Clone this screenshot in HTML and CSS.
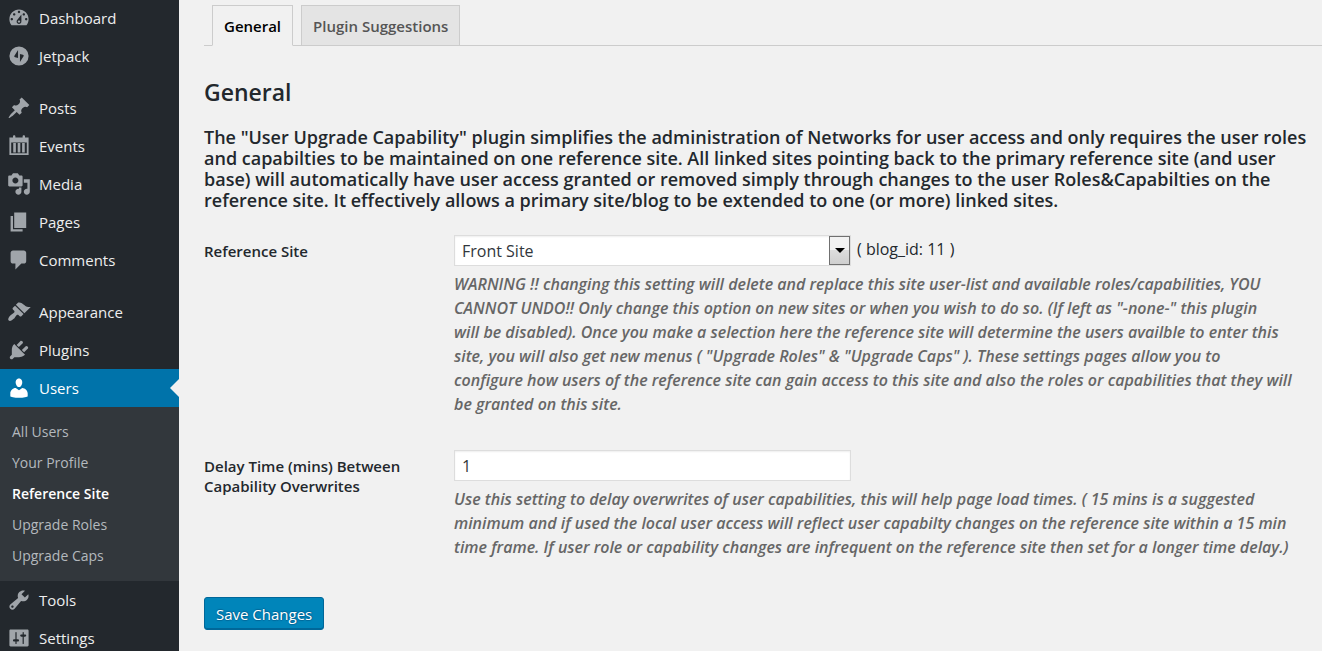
FILE: index.html
```html
<!DOCTYPE html>
<html lang="en">
<head>
<meta charset="utf-8">
<title>Reference Site</title>
<link rel="stylesheet" href="styles.css">
</head>
<body>
<div class="layout">
  <nav class="sidebar" aria-label="Main menu">
    <ul class="menu">
      <li><a class="menu-link" href="#"><svg class="icon" viewBox="0 0 20 20"><path fill-rule="evenodd" d="M3.76 16h12.48c1.1-1.37 1.76-3.11 1.76-5 0-4.42-3.58-8-8-8s-8 3.58-8 8c0 1.89.66 3.63 1.76 5zM10 4c.55 0 1 .45 1 1s-.45 1-1 1-1-.45-1-1 .45-1 1-1zM6 6c.55 0 1 .45 1 1s-.45 1-1 1-1-.45-1-1 .45-1 1-1zm8 0c.55 0 1 .45 1 1s-.45 1-1 1-1-.45-1-1 .45-1 1-1zm-5.37 5.55L12 7v6c0 1.1-.9 2-2 2s-2-.9-2-2c0-.57.24-1.08.63-1.45zM4 10c.55 0 1 .45 1 1s-.45 1-1 1-1-.45-1-1 .45-1 1-1zm12 0c.55 0 1 .45 1 1s-.45 1-1 1-1-.45-1-1 .45-1 1-1zm-5 3c0-.55-.45-1-1-1s-1 .45-1 1 .45 1 1 1 1-.45 1-1z"/></svg>Dashboard</a></li>
      <li><a class="menu-link" href="#"><svg class="icon" viewBox="0 0 20 20"><path fill-rule="evenodd" d="M10 2a8 8 0 1 0 0 16a8 8 0 0 0 0-16zM9.200 5v6.600l-2.400-.6c-.7-.2-.9-.7-.6-1.300zM10.800 15V8.400l2.400.6c.7.2.9.7.6 1.300z"/></svg>Jetpack</a></li>
    </ul>
    <ul class="menu">
      <li><a class="menu-link" href="#"><svg class="icon" viewBox="0 0 20 20"><path d="M10.44 3.02l1.82-1.82 6.36 6.35-1.83 1.82c-1.05-.68-2.48-.57-3.41.36l-.75.75c-.92.93-1.04 2.35-.35 3.41l-1.83 1.82-2.41-2.41-2.8 2.79c-.42.42-3.38 2.71-3.8 2.29s1.86-3.39 2.28-3.81l2.79-2.79L4.1 9.36l1.83-1.82c1.05.69 2.48.57 3.4-.36l.75-.75c.93-.92 1.05-2.35.36-3.41z"/></svg>Posts</a></li>
      <li><a class="menu-link" href="#"><svg class="icon" viewBox="0 0 20 20"><path fill-rule="evenodd" d="M2 3h3V2c0-.7.4-1 1-1s1 .3 1 1v1h6V2c0-.7.4-1 1-1s1 .3 1 1v1h3v14.500H2zM3.500 7v9h13V7zM5.200 7.500h2.200v8H5.200zM8.900 7.500h2.200v8H8.900zM12.600 7.500h2.200v8h-2.200z"/></svg>Events</a></li>
      <li><a class="menu-link" href="#"><svg class="icon" viewBox="0 0 20 20"><path fill-rule="evenodd" d="M13 11V4c0-.55-.45-1-1-1h-1.670L9 1H5L3.670 3H2c-.55 0-1 .45-1 1v7c0 .55.45 1 1 1h10c.55 0 1-.45 1-1zM7 4.500c1.380 0 2.500 1.120 2.500 2.500S8.380 9.500 7 9.500 4.500 8.380 4.500 7 5.620 4.500 7 4.500zM14 6h5v10.500c0 1.380-1.120 2.500-2.500 2.500S14 17.880 14 16.500s1.120-2.500 2.500-2.500c.17 0 .34.02.5.05V9h-3V6zm-4 8.050V13h2v3.500c0 1.380-1.120 2.500-2.500 2.500S7 17.880 7 16.500 8.120 14 9.500 14c.17 0 .34.02.5.05z"/></svg>Media</a></li>
      <li><a class="menu-link" href="#"><svg class="icon" viewBox="0 0 20 20"><path d="M6 15V2h10v13H6zm-1 1h8v2H3V5h2v11z"/></svg>Pages</a></li>
      <li><a class="menu-link" href="#"><svg class="icon" viewBox="0 0 20 20"><path d="M5 2h9c1.100 0 2 .9 2 2v7c0 1.100-.9 2-2 2h-2l-5 5v-5H5c-1.100 0-2-.9-2-2V4c0-1.100.9-2 2-2z"/></svg>Comments</a></li>
    </ul>
    <ul class="menu">
      <li><a class="menu-link" href="#"><svg class="icon" viewBox="0 0 20 20"><path d="M14.480 11.060L7.410 3.990l1.500-1.500c.5-.56 2.300-.47 3.510.32 1.210.8 1.430 1.280 2.910 2.100 1.180.64 2.450 1.260 4.450.85zm-.71.71L6.700 4.700 4.930 6.470c-.39.39-.39 1.020 0 1.410l1.060 1.060c.39.39.39 1.030 0 1.420-.6.6-1.430 1.110-2.210 1.690-.35.26-.7.53-1.010.84C1.430 14.230.4 16.080 1.400 17.070c.99 1 2.840-.03 4.180-1.360.31-.31.58-.66.85-1.020.57-.78 1.080-1.610 1.690-2.210.39-.39 1.020-.39 1.410 0l1.060 1.060c.39.39 1.020.39 1.410 0z"/></svg>Appearance</a></li>
      <li><a class="menu-link" href="#"><svg class="icon" viewBox="0 0 20 20"><path d="M13.110 4.360L9.870 7.600 8 5.730l3.240-3.240c.35-.34 1.050-.2 1.560.32.520.51.66 1.210.31 1.550zm-8 1.770l.91-1.120 9.010 9.010-1.190.84c-.71.71-2.630 1.160-3.820 1.160H6.140L4.900 17.260c-.59.59-1.540.59-2.120 0-.59-.58-.59-1.530 0-2.120l1.240-1.240v-3.880c0-1.130.4-3.190 1.090-3.890zm7.260 3.970l3.240-3.240c.34-.35 1.040-.21 1.550.31.52.51.66 1.210.31 1.550l-3.240 3.250z"/></svg>Plugins</a></li>
      <li>
        <a class="menu-link menu-link-open" href="#"><svg class="icon" viewBox="0 0 20 20"><path d="M10 9.250c-2.270 0-2.730-3.440-2.730-3.440C7 4.020 7.820 2 9.970 2c2.160 0 2.980 2.020 2.710 3.810 0 0-.41 3.440-2.680 3.440zm0 2.570L12.720 10c2.390 0 4.520 2.330 4.520 4.530v2.490s-3.650 1.130-7.240 1.130c-3.650 0-7.240-1.130-7.240-1.130v-2.490c0-2.250 1.940-4.480 4.470-4.480z"/></svg>Users</a>
        <ul class="submenu">
          <li><a class="submenu-link" href="#">All Users</a></li>
          <li><a class="submenu-link" href="#">Your Profile</a></li>
          <li><a class="submenu-link submenu-link-current" href="#" aria-current="page">Reference Site</a></li>
          <li><a class="submenu-link" href="#">Upgrade Roles</a></li>
          <li><a class="submenu-link" href="#">Upgrade Caps</a></li>
        </ul>
      </li>
      <li><a class="menu-link" href="#"><svg class="icon" viewBox="0 0 20 20"><path fill-rule="evenodd" d="M16.680 9.770c-1.340 1.340-3.300 1.670-4.950.99l-5.410 6.520c-.99.99-2.590.99-3.580 0s-.99-2.590 0-3.570l6.520-5.420c-.68-1.650-.35-3.610.99-4.950 1.280-1.280 3.120-1.620 4.720-1.060l-2.890 2.890 2.820 2.820 2.860-2.870c.53 1.580.18 3.390-1.080 4.650zM3.810 16.210c.4.39 1.040.39 1.430 0 .4-.4.4-1.040 0-1.430-.39-.4-1.030-.4-1.430 0-.39.39-.39 1.030 0 1.430z"/></svg>Tools</a></li>
      <li><a class="menu-link" href="#"><svg class="icon" viewBox="0 0 20 20"><path fill-rule="evenodd" d="M18 16V4c0-.55-.45-1-1-1H3c-.55 0-1 .45-1 1v12c0 .55.45 1 1 1h14c.55 0 1-.45 1-1zM8 11h1c.55 0 1 .45 1 1s-.45 1-1 1H8v1.500c0 .28-.22.5-.5.5s-.5-.22-.5-.5V13H6c-.55 0-1-.45-1-1s.45-1 1-1h1V5.500c0-.28.22-.5.5-.5s.5.22.5.5V11zm5-2h-1c-.55 0-1-.45-1-1s.45-1 1-1h1V5.500c0-.28.22-.5.5-.5s.5.22.5.5V7h1c.55 0 1 .45 1 1s-.45 1-1 1h-1v5.500c0 .28-.22.5-.5.5s-.5-.22-.5-.5V9z"/></svg>Settings</a></li>
    </ul>
  </nav>
  <main class="content">
    <nav class="tabs" aria-label="Settings sections">
      <a class="tab tab-active" href="#">General</a>
      <a class="tab" href="#">Plugin Suggestions</a>
    </nav>
    <form class="settings">
      <h2 class="title">General</h2>
      <p class="intro">The "User Upgrade Capability" plugin simplifies the administration of Networks for user access and only requires the user roles<br>and capabilties to be maintained on one reference site. All linked sites pointing back to the primary reference site (and user<br>base) will automatically have user access granted or removed simply through changes to the user Roles&amp;Capabilties on the<br>reference site. It effectively allows a primary site/blog to be extended to one (or more) linked sites.</p>
      <div class="field">
        <label class="field-label" for="site">Reference Site</label>
        <div class="field-body">
          <div class="control-line">
            <div class="select-wrap">
              <select class="control" id="site"><option>Front Site</option></select>
              <span class="select-arrow"><svg class="caret" viewBox="0 0 10 5"><path d="M0 0h10L5 5z"/></svg></span>
            </div>
            <span class="note">( blog_id: 11 )</span>
          </div>
          <p class="help">WARNING !! changing this setting will delete and replace this site user-list and available roles/capabilities, YOU<br>CANNOT UNDO!! Only change this option on new sites or when you wish to do so. (If left as "-none-" this plugin<br>will be disabled). Once you make a selection here the reference site will determine the users availble to enter this<br>site, you will also get new menus ( "Upgrade Roles" &amp; "Upgrade Caps" ). These settings pages allow you to<br>configure how users of the reference site can gain access to this site and also the roles or capabilities that they will<br>be granted on this site.</p>
        </div>
      </div>
      <div class="field">
        <label class="field-label" for="delay">Delay Time (mins) Between Capability Overwrites</label>
        <div class="field-body">
          <input class="control" id="delay" type="text" value="1">
          <p class="help">Use this setting to delay overwrites of user capabilities, this will help page load times. ( 15 mins is a suggested<br>minimum and if used the local user access will reflect user capabilty changes on the reference site within a 15 min<br>time frame. If user role or capability changes are infrequent on the reference site then set for a longer time delay.)</p>
        </div>
      </div>
      <button class="save" type="button">Save Changes</button>
    </form>
  </main>
</div>
</body>
</html>
```
FILE: styles.css
```css
* { box-sizing: border-box; }
html { overflow: hidden; }
body {
  margin: 0;
  background: #f1f1f1;
  color: #23282d;
  font-family: "Open Sans", "Noto Sans", sans-serif;
  font-size: 15px;
}
ul { margin: 0; padding: 0; list-style: none; }
a { text-decoration: none; }

.layout { display: flex; height: 100vh; }

.sidebar {
  flex: 0 0 179px;
  display: flex;
  flex-direction: column;
  gap: 14px;
  margin-top: -1px;
  background: #23282d;
  overflow: hidden;
}
.menu-link {
  display: flex;
  align-items: center;
  gap: 8px;
  height: 38px;
  padding-left: 7px;
  color: #eee;
}
.icon { width: 24px; height: 24px; fill: #a0a5aa; }
.menu-link-open { position: relative; background: #0073aa; color: #fff; }
.menu-link-open .icon { fill: #fff; }
.menu-link-open::after {
  content: "";
  position: absolute;
  right: 0;
  top: 10px;
  border: 9px solid transparent;
  border-left-width: 0;
  border-right-color: #f1f1f1;
}
.submenu { padding: 9px 0 10px; background: #32373c; }
.submenu-link {
  display: block;
  padding-left: 12px;
  color: #b4b9be;
  font-size: 14px;
  line-height: 31px;
}
.submenu-link-current { color: #fff; font-weight: 600; }

.content { flex: 1; min-width: 0; padding: 5px 0 0 25px; }
.tabs {
  display: flex;
  gap: 8px;
  padding-left: 8px;
  border-bottom: 1px solid #ccc;
}
.tab {
  margin-bottom: -1px;
  padding: 1px 11px 0;
  border: 1px solid #ccc;
  background: #e4e4e4;
  color: #555;
  font-weight: 600;
  line-height: 38px;
  white-space: nowrap;
}
.tab-active { border-bottom-color: #f1f1f1; background: #f1f1f1; color: #000; }

.settings { padding-right: 12px; }
.title { margin: 30px 0 19px; font-size: 23px; font-weight: 600; line-height: 32px; }
.intro { margin: 0 0 24px; font-size: 18px; font-weight: 600; line-height: 21px; white-space: nowrap; }
.field { display: grid; grid-template-columns: 250px 1fr; margin-bottom: 34px; }
.field-label { padding: 6px 40px 0 0; font-weight: 600; line-height: 20px; }
.control-line { display: flex; gap: 6px; }
.select-wrap { position: relative; width: 397px; }
.control {
  display: block;
  width: 397px;
  height: 31px;
  padding: 0 7px;
  border: 1px solid #ddd;
  border-radius: 0;
  background: #fff;
  box-shadow: inset 0 1px 2px rgba(0, 0, 0, .07);
  color: #32373c;
  font: inherit;
  font-size: 16px;
  appearance: none;
}
.select-arrow {
  position: absolute;
  top: 1px;
  right: 1px;
  display: flex;
  align-items: center;
  justify-content: center;
  width: 21px;
  height: 29px;
  border: 1px solid #707070;
  background: linear-gradient(#f2f2f2 50%, #ddd 50%, #cfcfcf);
  pointer-events: none;
}
.caret { width: 10px; height: 5px; }
.note { font-size: 16px; line-height: 28px; }
.help {
  margin: 6px 0 0;
  color: #666;
  font-size: 16px;
  font-style: italic;
  font-weight: 600;
  line-height: 24px;
  white-space: nowrap;
}
.save {
  height: 33px;
  margin-top: 4px;
  padding: 0 11px;
  border: 1px solid #006799;
  border-radius: 3px;
  background: #0085ba;
  box-shadow: inset 0 -1px 0 #006799;
  color: #fff;
  font: inherit;
  text-shadow: 0 -1px 1px #006799, 1px 0 1px #006799, 0 1px 1px #006799;
}
```
